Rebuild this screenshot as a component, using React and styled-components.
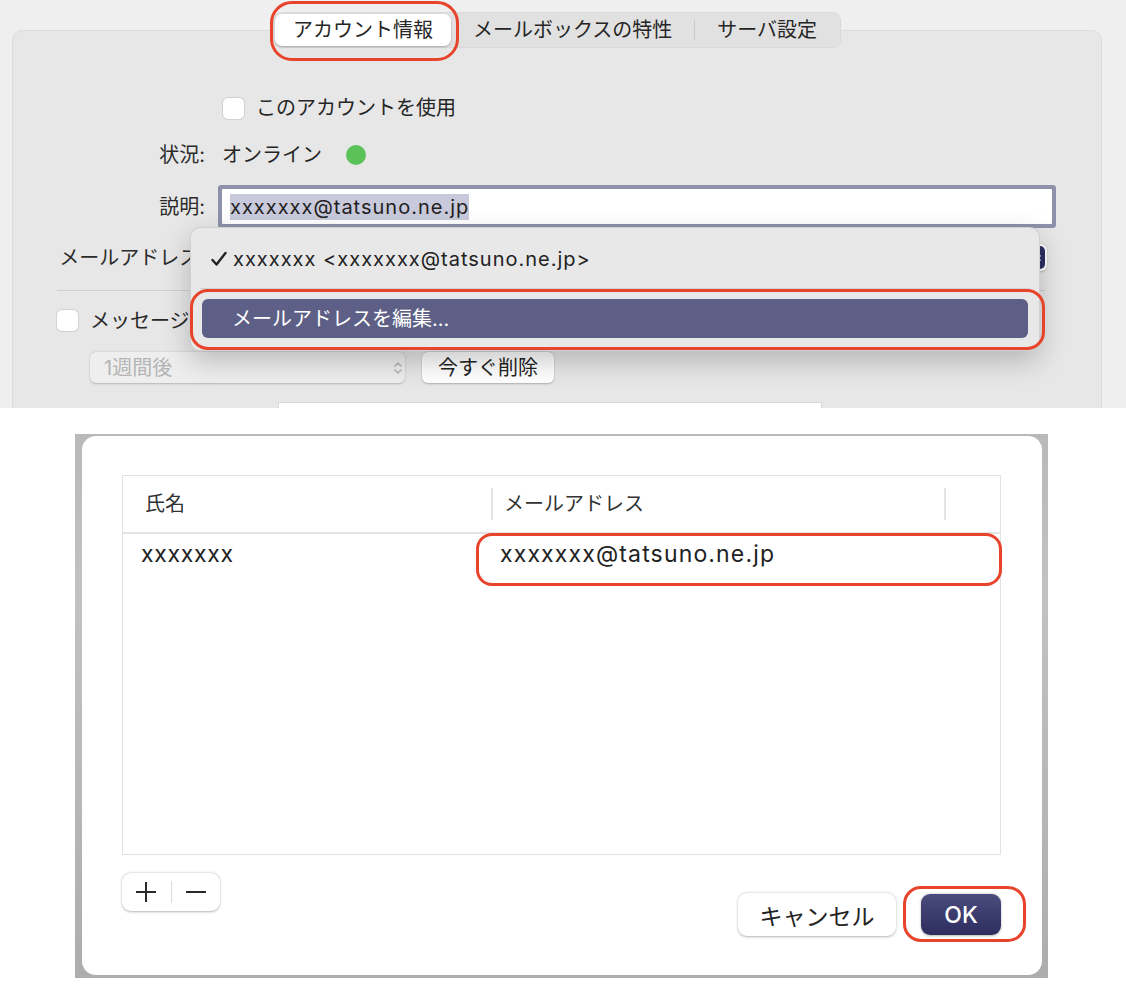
import styled, { createGlobalStyle } from "styled-components"

const GlobalStyle = createGlobalStyle`
  body {
    margin: 0;
    background: #fff;
    font-family: Inter, "Noto Sans CJK JP", sans-serif;
    color: #262626;
  }
`

const Page = styled.div`
  width: 1126px;
`

/* latin strings are a bit wider in the original system font */
const Latin = styled.span`
  letter-spacing: ${p => p.$track || 0.05}em;
`

/* ---------- top screenshot: account preferences ---------- */

const Prefs = styled.section`
  position: relative;
  height: 408px;
  overflow: hidden;
  background: #efefef;
  padding: 12px 24px 0 12px;
  box-sizing: border-box;
`

const TabBar = styled.div`
  position: relative;
  z-index: 1;
  display: flex;
  justify-content: center;
`

const Segmented = styled.div`
  display: flex;
  align-items: center;
  height: 36px;
  padding: 0 2px;
  background: #e1e1e1;
  border-radius: 9px;
  box-shadow: inset 0 0 0 0.5px rgba(0, 0, 0, 0.07);
`

const Tab = styled.div`
  height: 32px;
  display: flex;
  align-items: center;
  padding: ${p => (p.$active ? "0 18px" : "0 22px")};
  font-size: 20px;
  line-height: 1;
  color: #262626;
  border-radius: 7px;
  background: ${p => (p.$active ? "#fff" : "transparent")};
  box-shadow: ${p => (p.$active ? "0 1px 2px rgba(0,0,0,0.25)" : "none")};
`

const TabDivider = styled.span`
  width: 1px;
  height: 20px;
  background: #c9c9c9;
`

const Panel = styled.div`
  margin-top: -18px;
  height: 420px;
  background: #e6e7e6;
  border: 1px solid #dddddd;
  border-radius: 10px;
  display: flex;
  flex-direction: column;
`

const Row = styled.div`
  display: flex;
  align-items: center;
  height: ${p => p.$h}px;
  margin-top: ${p => p.$top}px;
  padding-left: ${p => p.$indent || 0}px;
  font-size: 20px;
  line-height: 1;
`

const Label = styled.div`
  width: 192px;
  flex-shrink: 0;
  margin-right: 17px;
  text-align: right;
  color: #2b2b2b;
  white-space: nowrap;
`

const Checkbox = styled.span`
  width: 21px;
  height: 21px;
  flex-shrink: 0;
  margin-right: 12px;
  background: #fff;
  border-radius: 5px;
  box-shadow: 0 0 0 1px #d2d2d2, 0 1px 1px rgba(0, 0, 0, 0.05);
`

const StatusDot = styled.span`
  width: 20px;
  height: 20px;
  margin-left: 24px;
  border-radius: 50%;
  background: #5bc25a;
`

const TextField = styled.div`
  width: 830px;
  height: 35px;
  display: flex;
  align-items: center;
  padding-left: 8px;
  box-sizing: border-box;
  background: #fff;
  box-shadow: 0 0 0 4px #8f91aa;
  border-radius: 1px;
`

const Selected = styled.span`
  background: #c8c9da;
  padding: 3px 0;
  color: #1f1f1f;
`

const PopUp = styled.div`
  width: ${p => p.$w}px;
  height: ${p => p.$h}px;
  display: flex;
  align-items: center;
  justify-content: space-between;
  padding: 0 2px 0 14px;
  box-sizing: border-box;
  background: ${p => (p.$disabled ? "#eeeeee" : "#fff")};
  color: ${p => (p.$disabled ? "#b4b4b4" : "#262626")};
  border-radius: 6px;
  box-shadow: 0 0.5px 2px rgba(0, 0, 0, 0.22);
`

const Stepper = styled.span`
  width: 17px;
  height: 23px;
  margin-left: auto;
  display: flex;
  align-items: center;
  justify-content: center;
  background: #2d2f62;
  border-radius: 5px;
`

const PushButton = styled.div`
  height: 31px;
  display: flex;
  align-items: center;
  margin-left: 17px;
  padding: 0 16px;
  background: #fff;
  border-radius: 6px;
  box-shadow: 0 0.5px 2px rgba(0, 0, 0, 0.25);
  color: #222;
`

const Separator = styled.div`
  height: 1px;
  width: 988px;
  margin: 19px 0 0 44px;
  background: #cfcfcf;
`

const CutBox = styled.div`
  width: 542px;
  height: 30px;
  margin: 19px 0 0 265px;
  background: #fff;
  border: 1px solid #d8d8d8;
`

const Menu = styled.div`
  position: absolute;
  left: 190px;
  top: 227px;
  z-index: 2;
  width: 850px;
  padding: 10px 11px 12px;
  box-sizing: border-box;
  background: #e8e8e8;
  border: 1px solid rgba(0, 0, 0, 0.1);
  border-radius: 10px;
  box-shadow: 0 10px 28px rgba(0, 0, 0, 0.22);
  font-size: 20px;
  line-height: 1;
`

const MenuItem = styled.div`
  height: ${p => p.$h}px;
  display: flex;
  align-items: center;
  gap: 5px;
  padding-left: ${p => p.$pad}px;
  border-radius: 6px;
  background: ${p => (p.$highlight ? "#5d5f86" : "transparent")};
  color: ${p => (p.$highlight ? "#fff" : "#222")};
`

const MenuSeparator = styled.div`
  height: 1px;
  margin: 8px -2px 10px;
  background: #d2d2d2;
`

const Ring = styled.div`
  position: absolute;
  z-index: 3;
  left: ${p => p.$x}px;
  top: ${p => p.$y}px;
  width: ${p => p.$w}px;
  height: ${p => p.$h}px;
  box-sizing: border-box;
  border: 3px solid #e8432b;
  border-radius: ${p => p.$r}px;
  pointer-events: none;
`

/* ---------- bottom screenshot: edit addresses sheet ---------- */

const SheetShot = styled.section`
  margin: 26px 0 0 75px;
  width: 973px;
  height: 544px;
  padding: 2px 6px 3px 7px;
  box-sizing: border-box;
  background: linear-gradient(180deg, #b9b9b9 0%, #c2c2c2 30%, #adadad 100%);
`

const Sheet = styled.div`
  position: relative;
  height: 100%;
  padding: 39px 41px 0 40px;
  box-sizing: border-box;
  background: #fff;
  border-radius: 14px;
  display: flex;
  flex-direction: column;
`

const Table = styled.div`
  height: 380px;
  border: 1.5px solid #e2e2e2;
  box-sizing: border-box;
`

const HeaderRow = styled.div`
  display: grid;
  grid-template-columns: 368px 453px 1fr;
  align-items: center;
  height: 56px;
  border-bottom: 2px solid #e4e4e4;
  font-size: 20px;
  color: #333;
`

const HeaderCell = styled.div`
  height: 32px;
  line-height: 32px;
  padding-left: ${p => p.$pad}px;
  border-left: ${p => (p.$divider ? "2px solid #e4e4e4" : "none")};
`

const DataRow = styled.div`
  display: grid;
  grid-template-columns: 368px 453px 1fr;
  align-items: center;
  height: 40px;
  font-size: 23px;
  color: #222;
`

const DataCell = styled.div`
  padding-left: ${p => p.$pad}px;
`

const Footer = styled.div`
  display: flex;
  justify-content: space-between;
  align-items: flex-start;
`

const AddRemove = styled.div`
  margin-top: 18px;
  width: 98px;
  height: 38px;
  display: flex;
  align-items: center;
  background: #fff;
  border-radius: 9px;
  box-shadow: 0 0.5px 2.5px rgba(0, 0, 0, 0.3);
`

const AddRemoveHalf = styled.span`
  flex: 1;
  display: flex;
  justify-content: center;
  align-items: center;
`

const AddRemoveDivider = styled.span`
  width: 1px;
  height: 22px;
  background: #dcdcdc;
`

const Buttons = styled.div`
  margin-top: 38px;
  display: flex;
  align-items: center;
  gap: 25px;
`

const DialogButton = styled.div`
  width: ${p => p.$w}px;
  height: ${p => p.$h}px;
  display: flex;
  align-items: center;
  justify-content: center;
  font-size: 23px;
  font-weight: ${p => (p.$primary ? 500 : 400)};
  border-radius: 9px;
  color: ${p => (p.$primary ? "#fff" : "#222")};
  background: ${p =>
    p.$primary ? "linear-gradient(180deg, #4a4c7d 0%, #2d2e5e 100%)" : "#fff"};
  box-shadow: 0 0.5px 2.5px rgba(0, 0, 0, 0.3);
`

const UpDown = ({ color }) => (
  <svg width="10" height="16" viewBox="0 0 10 16" fill="none">
    <path d="M2 6l3-3 3 3M2 10l3 3 3-3" stroke={color} strokeWidth="1.6" strokeLinecap="round" strokeLinejoin="round" />
  </svg>
)

const Check = () => (
  <svg width="18" height="18" viewBox="0 0 18 18" fill="none">
    <path d="M2.5 10l4 4.5L15.5 3" stroke="#222" strokeWidth="2.4" strokeLinecap="round" strokeLinejoin="round" />
  </svg>
)

const Plus = () => (
  <svg width="22" height="22" viewBox="0 0 22 22">
    <path d="M11 1v20M1 11h20" stroke="#2a2a2a" strokeWidth="2" />
  </svg>
)

const Minus = () => (
  <svg width="22" height="22" viewBox="0 0 22 22">
    <path d="M1 11h20" stroke="#2a2a2a" strokeWidth="2" />
  </svg>
)

const App = () => {
  const address = "xxxxxxx@tatsuno.ne.jp"

  return (
    <>
      <GlobalStyle />
      <Page>
        <Prefs>
          <TabBar>
            <Segmented>
              <Tab $active>アカウント情報</Tab>
              <Tab>メールボックスの特性</Tab>
              <TabDivider />
              <Tab>サーバ設定</Tab>
            </Segmented>
          </TabBar>

          <Panel>
            <Row $top={66} $h={22} $indent={210}>
              <Checkbox />
              このアカウントを使用
            </Row>
            <Row $top={22} $h={28}>
              <Label>状況:</Label>
              オンライン
              <StatusDot />
            </Row>
            <Row $top={20} $h={35}>
              <Label>説明:</Label>
              <TextField>
                <Selected><Latin>{address}</Latin></Selected>
              </TextField>
            </Row>
            <Row $top={20} $h={27}>
              <Label>メールアドレス:</Label>
              {/* the open menu hides this pop-up's title */}
              <PopUp $w={825} $h={27}>
                <Stepper>
                  <UpDown color="#fff" />
                </Stepper>
              </PopUp>
            </Row>
            <Separator />
            <Row $top={18} $h={23} $indent={44}>
              <Checkbox />
              メッセージ
            </Row>
            <Row $top={20} $h={31} $indent={77}>
              <PopUp $w={315} $h={31} $disabled>
                1週間後
                <UpDown color="#b8b8b8" />
              </PopUp>
              <PushButton>今すぐ削除</PushButton>
            </Row>
            <CutBox />
          </Panel>

          <Menu>
            <MenuItem $h={42} $pad={8}>
              <Check />
              <Latin>xxxxxxx &lt;{address}&gt;</Latin>
            </MenuItem>
            <MenuSeparator />
            <MenuItem $h={39} $pad={30} $highlight>
              メールアドレスを編集...
            </MenuItem>
          </Menu>

          <Ring $x={270} $y={1} $w={189} $h={60} $r={22} />
          <Ring $x={190} $y={289} $w={855} $h={61} $r={18} />
        </Prefs>

        <SheetShot>
          <Sheet>
            <Table>
              <HeaderRow>
                <HeaderCell $pad={22}>氏名</HeaderCell>
                <HeaderCell $pad={11} $divider>メールアドレス</HeaderCell>
                <HeaderCell $divider />
              </HeaderRow>
              <DataRow>
                <DataCell $pad={18}><Latin $track={0.03}>xxxxxxx</Latin></DataCell>
                <DataCell $pad={9}><Latin>{address}</Latin></DataCell>
                <DataCell />
              </DataRow>
            </Table>

            <Footer>
              <AddRemove>
                <AddRemoveHalf><Plus /></AddRemoveHalf>
                <AddRemoveDivider />
                <AddRemoveHalf><Minus /></AddRemoveHalf>
              </AddRemove>
              <Buttons>
                <DialogButton $w={158} $h={43}>キャンセル</DialogButton>
                <DialogButton $w={80} $h={41} $primary>OK</DialogButton>
              </Buttons>
            </Footer>

            <Ring $x={394} $y={97} $w={526} $h={53} $r={16} />
            <Ring $x={821} $y={450} $w={123} $h={56} $r={18} />
          </Sheet>
        </SheetShot>
      </Page>
    </>
  )
}

export default App
